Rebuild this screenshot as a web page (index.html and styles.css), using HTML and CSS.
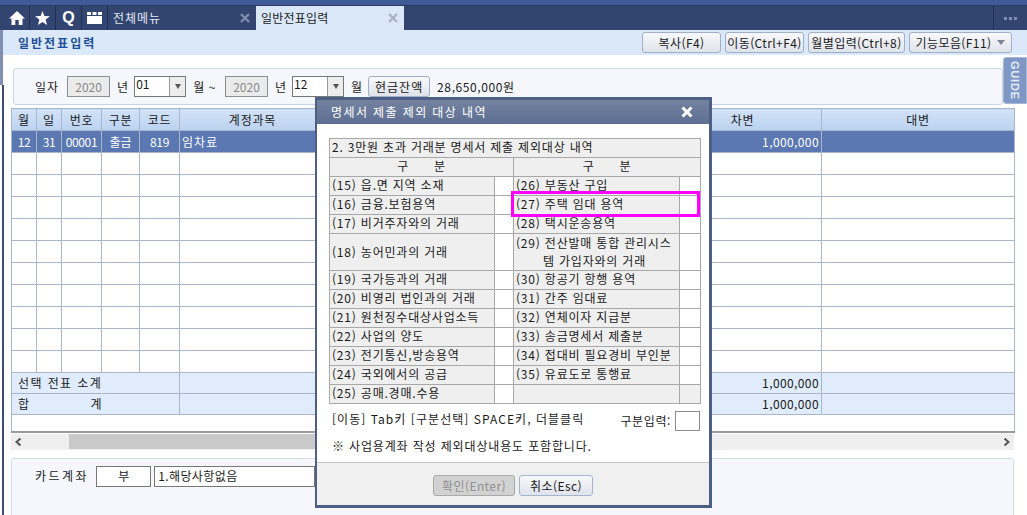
FILE: index.html
```html
<!DOCTYPE html>
<html lang="ko">
<head>
<meta charset="utf-8">
<title>일반전표입력</title>
<link rel="stylesheet" href="styles.css">
</head>
<body>
<div class="app">
  <div class="topstrip"></div>
  <nav class="tabbar">
    <div class="ico"><svg width="16" height="14" viewBox="0 0 16 14"><path fill="#fff" d="M8 0 L16 7.5 H13.5 V14 H9.7 V9 H6.3 V14 H2.5 V7.5 H0 Z"/></svg></div>
    <div class="ico"><svg width="15" height="14" viewBox="0 0 15 14"><path fill="#fff" d="M7.5 0 L9.4 4.9 L15 5.3 L10.6 8.6 L12.1 14 L7.5 11 L2.9 14 L4.4 8.6 L0 5.3 L5.6 4.9 Z"/></svg></div>
    <div class="ico q">Q</div>
    <div class="ico"><svg width="15" height="12" viewBox="0 0 15 12"><path fill="#fff" d="M0 0H4V3H0ZM5.5 0H9.5V3H5.5ZM11 0H15V3H11ZM0 4H15V12H0Z"/></svg></div>
    <div class="tab"><span>전체메뉴</span><svg class="x" width="10" height="10" viewBox="0 0 10 10"><path d="M1 1L9 9M9 1L1 9"/></svg></div>
    <div class="tab active"><span>일반전표입력</span><svg class="x" width="10" height="10" viewBox="0 0 10 10"><path d="M1 1L9 9M9 1L1 9"/></svg></div>
    <div class="more"><i></i><i></i><i></i></div>
  </nav>
  <header class="subhead">
    <h1>일반전표입력</h1>
    <div class="actions">
      <button class="btn w79">복사(F4)</button>
      <button class="btn w79">이동(Ctrl+F4)</button>
      <button class="btn w97">월별입력(Ctrl+8)</button>
      <button class="btn w103">기능모음(F11)<i class="caret"></i></button>
    </div>
  </header>
  <main class="content">
    <section class="filter">
      <span class="lb first">일자</span><span class="yr">2020</span><span class="lb">년</span>
      <span class="sel"><span>01</span><i><em></em></i></span><span class="lb tilde">월 ~</span>
      <span class="yr">2020</span><span class="lb">년</span>
      <span class="sel"><span>12</span><i><em></em></i></span><span class="lb">월</span>
      <button class="btn cash">현금잔액</button><span class="lb amount">28,650,000원</span>
    </section>
    <div class="guide">GUIDE</div>
    <table class="grid">
      <colgroup><col class="c1"><col class="c2"><col class="c3"><col class="c4"><col class="c5"><col class="c6"><col class="c6b"><col class="c7"><col class="c8"></colgroup>
      <thead><tr><th>월</th><th>일</th><th>번호</th><th>구분</th><th>코드</th><th>계정과목</th><th></th><th>차변</th><th>대변</th></tr></thead>
      <tbody>
        <tr class="sel-row"><td class="ctr dig">12</td><td class="ctr dig">31</td><td class="ctr dig">00001</td><td class="ctr">출금</td><td class="ctr dig">819</td><td class="acct">임차료</td><td></td><td class="num">1,000,000</td><td></td></tr>
        <tr><td></td><td></td><td></td><td></td><td></td><td></td><td></td><td></td><td></td></tr>
        <tr><td></td><td></td><td></td><td></td><td></td><td></td><td></td><td></td><td></td></tr>
        <tr><td></td><td></td><td></td><td></td><td></td><td></td><td></td><td></td><td></td></tr>
        <tr><td></td><td></td><td></td><td></td><td></td><td></td><td></td><td></td><td></td></tr>
        <tr><td></td><td></td><td></td><td></td><td></td><td></td><td></td><td></td><td></td></tr>
        <tr><td></td><td></td><td></td><td></td><td></td><td></td><td></td><td></td><td></td></tr>
        <tr><td></td><td></td><td></td><td></td><td></td><td></td><td></td><td></td><td></td></tr>
        <tr><td></td><td></td><td></td><td></td><td></td><td></td><td></td><td></td><td></td></tr>
        <tr><td></td><td></td><td></td><td></td><td></td><td></td><td></td><td></td><td></td></tr>
        <tr><td></td><td></td><td></td><td></td><td></td><td></td><td></td><td></td><td></td></tr>
        <tr class="sum"><td colspan="5" class="sumlb">선택 전표 소계</td><td></td><td></td><td class="num">1,000,000</td><td></td></tr>
        <tr class="sum"><td colspan="5" class="sumlb spread"><span>합</span><span>계</span></td><td></td><td></td><td class="num">1,000,000</td><td></td></tr>
        <tr class="tail"><td colspan="9"></td></tr>
      </tbody>
    </table>
    <div class="scroll"><svg class="arrow" width="7" height="8" viewBox="0 0 7 8"><path d="M5.5 .5L1.5 4L5.5 7.5"/></svg><div class="track"><div class="thumb"></div></div><svg class="arrow" width="7" height="8" viewBox="0 0 7 8"><path d="M1.5 .5L5.5 4L1.5 7.5"/></svg></div>
    <section class="bottom">
      <span class="lb card">카드계좌</span><span class="box no">부</span><span class="box wide">1.해당사항없음</span>
    </section>
  </main>
  <div class="modal">
    <div class="mtitle"><span>명세서 제출 제외 대상 내역</span><svg width="12" height="12" viewBox="0 0 12 12"><path d="M1.5 1.5L10.5 10.5M10.5 1.5L1.5 10.5"/></svg></div>
    <div class="mbody">
      <table class="mt">
        <colgroup><col class="m1"><col class="m2"><col class="m3"><col class="m4"></colgroup>
        <tr class="r19"><td colspan="4">2. 3만원 초과 거래분 명세서 제출 제외대상 내역</td></tr>
        <tr class="r19"><td colspan="2" class="h">구&nbsp;&nbsp;&nbsp;&nbsp;&nbsp;&nbsp;분</td><td colspan="2" class="h">구&nbsp;&nbsp;&nbsp;&nbsp;&nbsp;&nbsp;분</td></tr>
        <tr class="r19"><td>(15) 읍.면 지역 소재</td><td class="e"></td><td>(26) 부동산 구입</td><td class="e"></td></tr>
        <tr class="r19"><td>(16) 금융.보험용역</td><td class="e"></td><td>(27) 주택 임대 용역</td><td class="e"></td></tr>
        <tr class="r19"><td>(17) 비거주자와의 거래</td><td class="e"></td><td>(28) 택시운송용역</td><td class="e"></td></tr>
        <tr class="r38"><td>(18) 농어민과의 거래</td><td class="e"></td><td>(29) 전산발매 통합 관리시스<br><span class="ind">템 가입자와의 거래</span></td><td class="e"></td></tr>
        <tr class="r19"><td>(19) 국가등과의 거래</td><td class="e"></td><td>(30) 항공기 항행 용역</td><td class="e"></td></tr>
        <tr class="r19"><td>(20) 비영리 법인과의 거래</td><td class="e"></td><td>(31) 간주 임대료</td><td class="e"></td></tr>
        <tr class="r19"><td>(21) 원천징수대상사업소득</td><td class="e"></td><td>(32) 연체이자 지급분</td><td class="e"></td></tr>
        <tr class="r19"><td>(22) 사업의 양도</td><td class="e"></td><td>(33) 송금명세서 제출분</td><td class="e"></td></tr>
        <tr class="r19"><td>(23) 전기통신,방송용역</td><td class="e"></td><td>(34) 접대비 필요경비 부인분</td><td class="e"></td></tr>
        <tr class="r19"><td>(24) 국외에서의 공급</td><td class="e"></td><td>(35) 유료도로 통행료</td><td class="e"></td></tr>
        <tr class="r19"><td>(25) 공매.경매.수용</td><td class="e"></td><td></td><td class="g"></td></tr>
      </table>
      <div class="hint"><span class="htext">[이동] Tab키 [구분선택] SPACE키, 더블클릭</span><span class="inp"><span>구분입력:</span><i></i></span></div>
      <p class="note">※ 사업용계좌 작성 제외대상내용도 포함합니다.</p>
    </div>
    <div class="mfoot"><button class="btn off">확인(Enter)</button><button class="btn esc">취소(Esc)</button></div>
    <div class="mark"></div>
  </div>
</div>
</body>
</html>
```
FILE: styles.css
```css
* { box-sizing: border-box; }
html, body { margin: 0; height: 100%; }
body { font: 12px/14px "Noto Sans CJK KR", "Liberation Sans", sans-serif; color: #1a1a1a; overflow: hidden; background: #fff; }
.app { position: relative; width: 1027px; height: 515px; overflow: hidden; display: flex; flex-direction: column; }
.app::before { content: ""; position: absolute; left: 2px; top: 85px; width: 2px; bottom: 0; background: #3e4c78; }
.app::after { content: ""; position: absolute; left: 0; top: 30px; width: 3px; height: 55px; background: #7f90b3; }
.topstrip { flex: none; height: 5px; background: #3f5b97; }
.tabbar { flex: none; height: 25px; background: #324470; display: flex; align-items: stretch; padding-left: 4px; border-top: 1px solid #2a3a63; }
.ico { width: 26px; display: flex; align-items: center; justify-content: center; border-right: 1px solid #232f52; color: #fff; }
.ico.q { font: bold 16px "Liberation Sans", sans-serif; }
.tab { width: 148px; display: flex; align-items: center; justify-content: space-between; padding: 0 6px 0 5px; color: #e2e8f2; letter-spacing: 1px; }
.tab .x { fill: none; stroke: #7f8db0; stroke-width: 2.4; }
.tab.active { background: #dbe8f9; color: #1a1a1a; width: 148px; letter-spacing: .2px; }
.tab.active .x { stroke: #a9b3c2; }
.more { margin-left: auto; width: 34px; border-left: 1px solid #232f52; display: flex; align-items: center; justify-content: center; gap: 2px; }
.more i { width: 3px; height: 3px; background: #7f8db0; display: block; }
.subhead { flex: none; height: 25px; background: #dbe8f9; display: flex; align-items: center; justify-content: space-between; padding: 0 15px 0 18px; }
.subhead h1 { margin: 0; font-size: 12px; font-weight: 700; color: #1d4f99; letter-spacing: 2px; }
.actions { display: flex; gap: 4px; }
.btn { height: 21px; padding: 0; border: 1px solid #9fafc8; border-radius: 3px; background: linear-gradient(#f8f9fc, #dfe3ea); font: inherit; color: #1a1a1a; display: inline-flex; align-items: center; justify-content: center; letter-spacing: .4px; white-space: nowrap; }
.w79 { width: 79px; }
.w97 { width: 97px; }
.w103 { width: 103px; }
.caret { width: 0; height: 0; margin-left: 6px; border: 4px solid transparent; border-top: 5px solid #7a8597; border-bottom: 0; }
.content { flex: 1; min-height: 0; position: relative; padding: 13px 0 0 11px; }
.filter { width: 990px; margin-left: 2px; height: 37px; background: #f5f7fc; border: 1px solid #c9d6ea; border-radius: 3px; display: flex; align-items: center; padding-left: 21px; }
.lb { margin: 0 6px 0 7px; white-space: nowrap; }
.lb.first { margin: 0 8px 0 0; letter-spacing: 1px; }
.lb.tilde { margin-right: 9px; letter-spacing: .6px; }
.yr { width: 43px; height: 21px; background: #ebebeb; border: 1px solid #8e8e8e; color: #8a8a8a; display: flex; align-items: center; justify-content: center; }
.sel { width: 52px; height: 21px; background: #fff; border: 1px solid #777; display: flex; justify-content: space-between; padding-left: 1px; }
.sel i { width: 16px; background: #ededed; border-left: 1px solid #999; display: flex; align-items: center; justify-content: center; }
.sel em { width: 0; height: 0; border: 3.5px solid transparent; border-top: 5px solid #555; border-bottom: 0; }
.cash { width: 62px; margin: 0 7px 0 0; letter-spacing: 1px; }
.amount { margin-left: 0; letter-spacing: .6px; }
.guide { position: absolute; right: 0; top: 2px; width: 24px; height: 47px; background: #7e97c5; border: 1px solid #a5b8d8; border-radius: 3px 0 0 3px; color: #e5ecf8; font: bold 11px "Liberation Sans", sans-serif; letter-spacing: .8px; writing-mode: vertical-rl; text-align: center; line-height: 22px; }
.grid { width: 1003px; margin-top: 3px; border-collapse: collapse; table-layout: fixed; }
.grid col.c1 { width: 25px; } .grid col.c2 { width: 25px; } .grid col.c3 { width: 40px; }
.grid col.c4 { width: 38px; } .grid col.c5 { width: 40px; } .grid col.c6 { width: 146px; }
.grid col.c6b { width: 338px; } .grid col.c7 { width: 158px; } .grid col.c8 { width: 193px; }
.grid th, .grid td { border: 1px solid #aab6ca; padding: 0 2px; font-weight: 400; white-space: nowrap; overflow: hidden; }
.grid th { height: 22px; background: linear-gradient(#d3e3f7, #bad2f0); letter-spacing: .8px; }
.grid td { height: 22px; }
.sel-row td { background: #5b78b3; color: #fff; }
.ctr { text-align: center; }
.dig { letter-spacing: -.4px; }
.acct { letter-spacing: 1px; padding-left: 3px; }
.num { text-align: right; letter-spacing: .4px; }
.grid .sum td { height: 21px; background: #e0ecfb; padding-bottom: 1px; }
.grid td.sumlb { letter-spacing: 1.4px; padding-left: 6px; }
.spread > span:last-child { margin-left: 60px; }
.grid .tail td { height: 17px; border-bottom: 2px solid #9a9a9a; }
.scroll { width: 1003px; margin-top: 1px; height: 16px; background: #efefef; display: flex; align-items: center; justify-content: space-between; }
.arrow { flex: none; margin: 0 4px; fill: none; stroke: #555; stroke-width: 2; }
.track { flex: 1; height: 15px; padding-left: 43px; }
.thumb { height: 15px; width: 400px; background: #c9c9c9; }
.bottom { width: 1003px; height: 70px; margin-top: 8px; background: #f5f7fc; border: 1px solid #d3dcec; border-radius: 3px; display: flex; align-items: flex-start; padding: 7px 0 0 23px; }
.card { margin: 3px 7px 0 0; letter-spacing: 2.5px; }
.box { height: 21px; background: #fff; border: 1px solid #777; display: flex; align-items: center; }
.no { width: 55px; justify-content: center; }
.wide { width: 161px; margin-left: 3px; padding-left: 3px; letter-spacing: .4px; }
.modal { position: absolute; left: 315px; top: 97px; width: 397px; height: 411px; background: #fff; border: 3px solid #4d5f85; border-left-width: 2px; border-bottom-width: 3px; display: flex; flex-direction: column; }
.mtitle { height: 24px; flex: none; background: linear-gradient(#74829f, #5e6f93); color: #fff; display: flex; align-items: center; justify-content: space-between; padding: 0 16px 0 14px; letter-spacing: 1.4px; }
.mtitle svg { fill: none; stroke: #fff; stroke-width: 3; }
.mbody { flex: 1; min-height: 0; padding: 14px 11px 0 12px; }
.mt { width: 371px; border-collapse: collapse; table-layout: fixed; }
.m1 { width: 165px; } .m2 { width: 19px; } .m3 { width: 166px; } .m4 { width: 21px; }
.mt td { background: #efefef; border: 1px solid #a8a8a8; padding: 0 2px 2px; white-space: nowrap; overflow: hidden; letter-spacing: .8px; }
.mt td.e { background: #fff; }
.mt td.g { background: #efefef; }
.mt td.h { text-align: center; }
.r19 td { height: 19px; }
.mt .r38 td { height: 37px; line-height: 18px; padding-bottom: 0; }
.ind { margin-left: 27px; }
.hint { display: flex; justify-content: space-between; align-items: center; margin-top: 6px; width: 371px; height: 21px; padding-left: 3px; }
.htext { letter-spacing: 1.05px; margin-bottom: 3px; }
.inp { display: flex; align-items: center; gap: 4px; letter-spacing: .6px; }
.inp i { width: 25px; height: 20px; background: #fff; border: 1px solid #8c8c8c; display: block; }
.note { margin: 8px 0 0; padding-left: 3px; letter-spacing: .85px; }
.mfoot { height: 43px; flex: none; background: #f0f0f0; border-top: 1px solid #c4c4c8; display: flex; justify-content: flex-start; align-items: flex-start; padding: 12px 0 0 116px; gap: 4px; }
.off { width: 82px; background: #d2d2d2; border-color: #a9a9a9; color: #909090; }
.esc { width: 74px; border-color: #a5b5d0; }
.mark { position: absolute; left: 194px; top: 91px; width: 189px; height: 26px; border: 3px solid #f0f; }
```
